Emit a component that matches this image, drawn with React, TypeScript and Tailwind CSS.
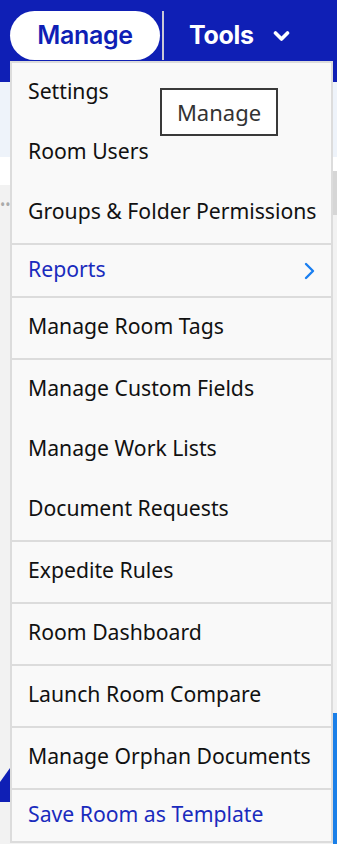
const groups: { label: string; tone?: "link" | "sub"; short?: boolean }[][] = [
  [{ label: "Settings" }, { label: "Room Users" }, { label: "Groups & Folder Permissions" }],
  [{ label: "Reports", tone: "sub", short: true }],
  [{ label: "Manage Room Tags" }],
  [{ label: "Manage Custom Fields" }, { label: "Manage Work Lists" }, { label: "Document Requests" }],
  [{ label: "Expedite Rules" }],
  [{ label: "Room Dashboard" }],
  [{ label: "Launch Room Compare" }],
  [{ label: "Manage Orphan Documents" }],
  [{ label: "Save Room as Template", tone: "link", short: true }],
];

export default function App() {
  return (
    <div className="relative h-[844px] w-[337px] overflow-hidden bg-[#f2f2f2] font-['Noto_Sans',sans-serif]">
      {/* Header */}
      <div className="flex h-[82px] items-start bg-[#0f1fb5] pl-[10px] pt-[11px] font-['Inter',sans-serif] text-[25px] tracking-[-0.3px]">
        <div className="flex h-[49px] w-[150px] items-center justify-center rounded-full bg-white font-semibold text-[#0f1fb5]">
          Manage
        </div>
        <div className="ml-[2px] h-[49px] w-[2px] bg-[#c9c9d6]" />
        <div className="flex h-[49px] items-center pl-[25px] font-bold text-white">
          Tools
          <svg className="ml-[19px]" width="17" height="12" viewBox="0 0 17 12" fill="none">
            <path d="M2.5 3 L8.5 9 L14.5 3" stroke="white" strokeWidth="3.6" strokeLinecap="round" strokeLinejoin="round" />
          </svg>
        </div>
      </div>
      <div className="h-[75px] bg-[#eef3fa]" />
      <div className="h-[28px] bg-white" />
      <div className="absolute left-0 top-[198px] text-[14px] leading-none text-[#aaa]">••</div>
      <div className="absolute right-0 top-[171px] h-[44px] w-[4px] bg-[#d6d6d6]" />
      <div className="absolute right-0 top-[713px] h-[131px] w-[4px] bg-[#1a7fe8]" />
      <svg className="absolute left-0 top-[768px]" width="10" height="34" viewBox="0 0 10 34">
        <path d="M0 14 L10 0 L10 34 L0 34 Z" fill="#0f1fb5" />
      </svg>

      {/* Dropdown menu */}
      <div className="absolute left-[10px] top-[61px] w-[323px] border-2 border-[#dcdcdc] bg-[#f9f9f9]">
        {groups.map((group, gi) => (
          <div key={gi} className={gi > 0 ? "border-t-2 border-[#dcdcdc]" : ""}>
            {group.map((item) => (
              <div
                key={item.label}
                className={`flex items-center justify-between whitespace-nowrap pl-[16px] pr-[16px] text-[21.2px] leading-none ${
                  item.short ? "h-[51px]" : "h-[60px]"
                } ${item.tone ? "text-[#1a2bbd]" : "text-[#111]"}`}
              >
                <span className="-mt-[4px]">{item.label}</span>
                {item.tone === "sub" && (
                  <svg width="11" height="18" viewBox="0 0 11 18" fill="none">
                    <path d="M2 2 L9 9 L2 16" stroke="#1a7ff0" strokeWidth="2.4" strokeLinecap="round" strokeLinejoin="round" />
                  </svg>
                )}
              </div>
            ))}
          </div>
        ))}
      </div>

      {/* Tooltip */}
      <div className="absolute left-[160px] top-[88px] flex h-[48px] w-[118px] items-center justify-center border-2 border-[#3a3a3a] bg-white text-[22px] text-[#333]">
        Manage
      </div>
    </div>
  );
}
